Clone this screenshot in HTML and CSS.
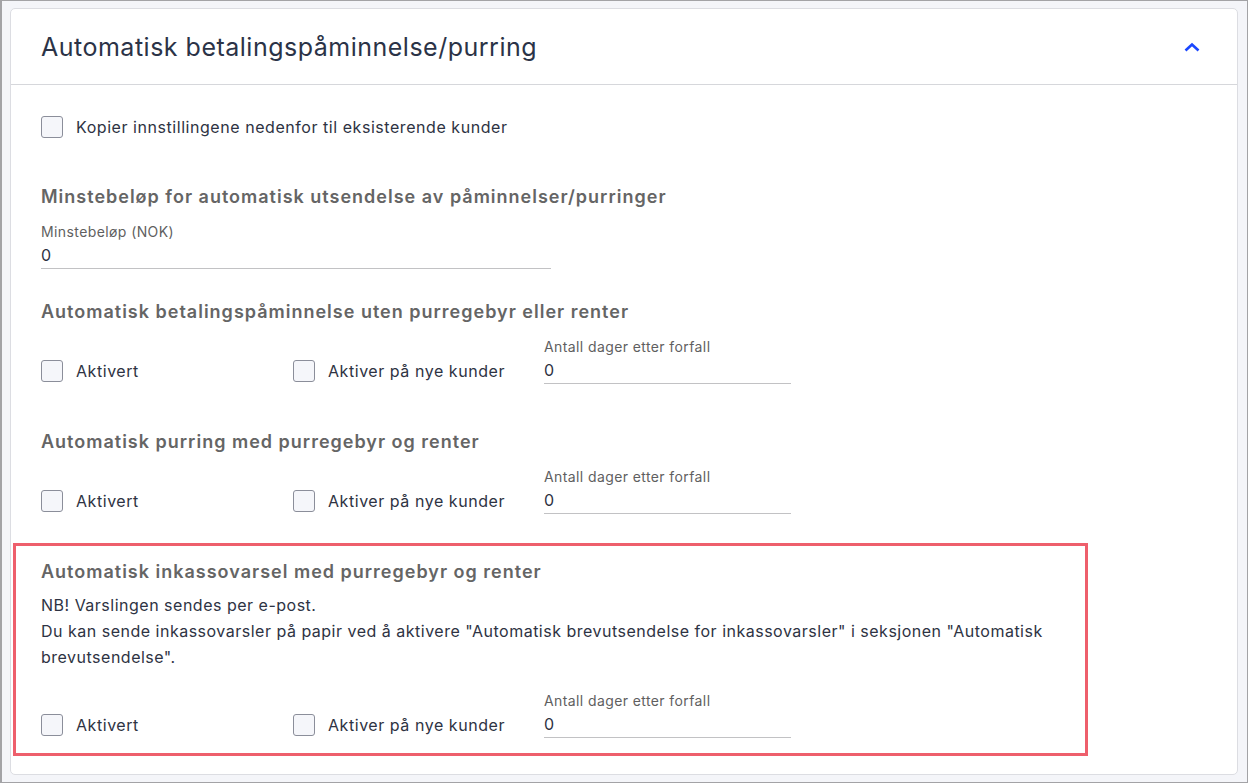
FILE: index.html
```html
<!DOCTYPE html>
<html lang="no">
<head>
    <meta charset="UTF-8">
    <meta name="viewport" content="width=device-width, initial-scale=1.0">
    <title>Automatisk betalingspåminnelse/purring</title>
    <link rel="stylesheet" href="styles.css">
</head>
<body>
    <div class="card">
        <div class="card-header">
            <h2>Automatisk betalingspåminnelse/purring</h2>
            <button class="toggle" aria-label="Skjul">
                <svg width="16" height="10" viewBox="0 0 16 10"><polyline points="1.5,8.5 8,2.5 14.5,8.5" fill="none" stroke="#1a47ff" stroke-width="2.6"/></svg>
            </button>
        </div>

        <div class="card-body">
            <div class="section section-copy">
                <label class="check">
                    <input type="checkbox">
                    <span class="box"></span>
                    Kopier innstillingene nedenfor til eksisterende kunder
                </label>
            </div>

            <div class="section section-min">
                <h3>Minstebeløp for automatisk utsendelse av påminnelser/purringer</h3>
                <div class="field field-wide">
                    <label>Minstebeløp (NOK)</label>
                    <input type="text" value="0">
                </div>
            </div>

            <div class="section">
                <h3>Automatisk betalingspåminnelse uten purregebyr eller renter</h3>
                <div class="row">
                    <label class="check"><input type="checkbox"><span class="box"></span>Aktivert</label>
                    <label class="check"><input type="checkbox"><span class="box"></span>Aktiver på nye kunder</label>
                    <div class="field">
                        <label>Antall dager etter forfall</label>
                        <input type="text" value="0">
                    </div>
                </div>
            </div>

            <div class="section">
                <h3>Automatisk purring med purregebyr og renter</h3>
                <div class="row">
                    <label class="check"><input type="checkbox"><span class="box"></span>Aktivert</label>
                    <label class="check"><input type="checkbox"><span class="box"></span>Aktiver på nye kunder</label>
                    <div class="field">
                        <label>Antall dager etter forfall</label>
                        <input type="text" value="0">
                    </div>
                </div>
            </div>

            <div class="section section-alert">
                <h3>Automatisk inkassovarsel med purregebyr og renter</h3>
                <p class="note">NB! Varslingen sendes per e-post.<br>Du kan sende inkassovarsler på papir ved å aktivere "Automatisk brevutsendelse for inkassovarsler" i seksjonen "Automatisk brevutsendelse".</p>
                <div class="row">
                    <label class="check"><input type="checkbox"><span class="box"></span>Aktivert</label>
                    <label class="check"><input type="checkbox"><span class="box"></span>Aktiver på nye kunder</label>
                    <div class="field">
                        <label>Antall dager etter forfall</label>
                        <input type="text" value="0">
                    </div>
                </div>
            </div>
        </div>
    </div>
</body>
</html>
```

FILE: styles.css
```css
html, body {
    height: 100%;
}
body {
    margin: 0;
    box-sizing: border-box;
    padding: 7px 9px 0 8px;
    border: 1px solid #a3a3a6;
    border-left-width: 2px;
    background-color: #f4f5f9;
    font-family: Inter, 'Noto Sans', sans-serif;
    color: #2e3343;
}
.card {
    height: 767px;
    box-sizing: border-box;
    background: white;
    border: 1px solid #dcdde2;
    border-radius: 5px;
}
.card-header {
    height: 75px;
    display: flex;
    align-items: center;
    justify-content: space-between;
    padding: 0 37px 0 30px;
    border-bottom: 1px solid #d6d7db;
}
.card-header h2 {
    margin: 0;
    font-size: 25px;
    letter-spacing: 0.5px;
    font-weight: 400;
    color: #2b3347;
}
.toggle {
    background: none;
    border: none;
    padding: 0;
    display: flex;
    cursor: pointer;
}
.card-body {
    padding: 14px 149px 0 2px;
}
.section {
    border: 3px solid transparent;
    padding: 14px 25px 26px 25px;
}
.section-copy {
    padding-bottom: 27px;
}
.section-min {
    padding-bottom: 11px;
}
.section-alert {
    border-color: #ee5f6c;
    padding-bottom: 15px;
}
.section h3 {
    margin: 0 0 13px 0;
    font-size: 18px;
    line-height: 24px;
    letter-spacing: 1px;
    font-weight: 600;
    color: #656565;
}
.section-alert h3 {
    margin-bottom: 8px;
}
.note {
    margin: 0 0 21px 0;
    font-size: 16px;
    line-height: 26px;
    letter-spacing: 0.5px;
    color: #2e3343;
}
.check {
    display: flex;
    align-items: center;
    gap: 13px;
    height: 27px;
    font-size: 16px;
    letter-spacing: 0.55px;
    cursor: pointer;
}
.check input {
    display: none;
}
.check .box {
    width: 22px;
    height: 22px;
    box-sizing: border-box;
    border: 1px solid #8b8e9a;
    border-radius: 3px;
    background-color: #f5f6fa;
}
.section-copy .check {
    height: 22px;
}
.row {
    display: grid;
    grid-template-columns: 252px 251px 247px;
    align-items: end;
}
.field label {
    display: block;
    font-size: 14px;
    line-height: 20px;
    letter-spacing: 0.4px;
    color: #5f5f5f;
}
.field input {
    display: block;
    width: 100%;
    height: 27px;
    box-sizing: border-box;
    padding: 0;
    border: none;
    border-bottom: 1px solid #c2c2c4;
    font-family: inherit;
    font-size: 16px;
    color: #2e3343;
    outline: none;
}
.field-wide {
    width: 510px;
}
```
